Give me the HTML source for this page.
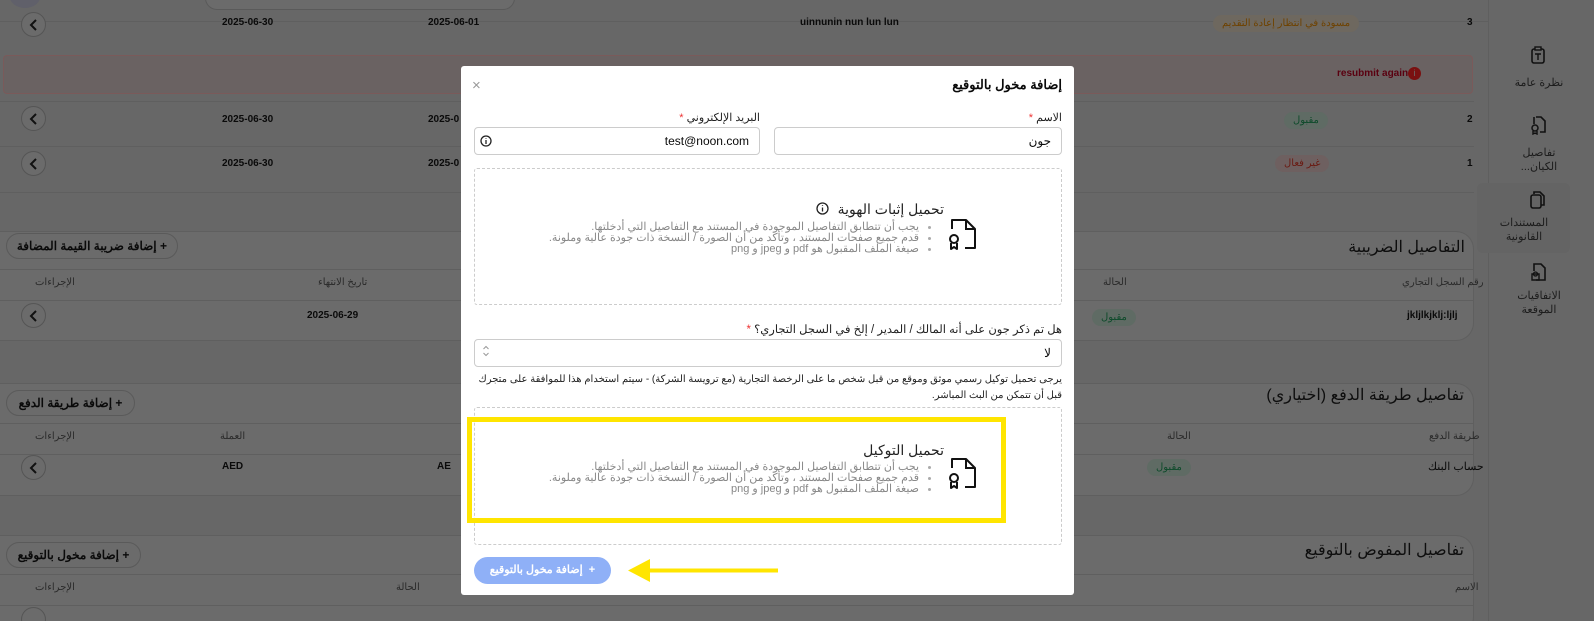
<!DOCTYPE html>
<html style="background:#676767"><head><meta charset="utf-8">
<style>
*{box-sizing:border-box;margin:0;padding:0}
html,body{width:1594px;height:621px;overflow:hidden}
body{position:relative;background:#676767;font-family:"Liberation Sans","Noto Sans CJK SC",sans-serif;color:#0a0a0a}
.a{position:absolute;white-space:nowrap}
.r{direction:rtl}
.line{position:absolute;height:1px;background:#5f5f5f}
.card{position:absolute;background:#6b6b6b;border:1px solid #5f5f5f;border-radius:0 18px 18px 0;border-left:none}
.chev{position:absolute;width:25px;height:25px;border:1px solid #555;border-radius:50%;background:#6b6b6b}
.chev svg{position:absolute;left:6px;top:5px}
.badge{position:absolute;height:17px;border-radius:9px;font-size:10px;line-height:17px;padding:0 9px;direction:rtl;white-space:nowrap}
.g{background:#5f6b64;color:#0d4a2a}
.btn{position:absolute;height:26px;border:1px solid #5a5a5a;border-radius:14px;background:#6b6b6b;font-size:12px;line-height:24px;direction:rtl;padding:0 10px;font-weight:bold;color:#0a0a0a;white-space:nowrap;text-align:center}
.hd{font-size:10px;color:#2a2a2a;direction:rtl}
.dt{font-size:10px;font-weight:bold}
.ttl{font-size:16px;direction:rtl;color:#0e0e0e}
.side{font-size:11px;color:#1c1c1c;direction:rtl;text-align:center;width:100px;line-height:14px}
#m{position:absolute;left:461px;top:66px;width:613px;height:529px;background:#fff;border-radius:3px}
.lab{font-size:11px;direction:rtl;color:#222}
.inp{position:absolute;height:28px;border:1px solid #ccc;border-radius:4px;background:#fff;font-size:12px;line-height:26px;direction:rtl;padding:0 10px}
.dash{position:absolute;border:1px dashed #ccc;border-radius:3px}
ul.b{position:absolute;direction:rtl;font-size:11px;color:#888;line-height:11px;list-style:disc;padding-right:18px}
ul.b li::marker{color:#aaa;font-size:9px}
.ut{font-size:14px;direction:rtl;color:#222}
</style></head><body>
<div class="line" style="left:0;top:21px;width:1488px"></div>
<div class="a" style="left:205px;top:-14px;width:310px;height:24px;border:1px solid #5a5a5a;border-radius:12px;background:#6b6b6b"></div>
<div class="a" style="left:10px;top:-14px;width:30px;height:22px;border-radius:50%;background:#60606a"></div>
<div class="line" style="left:1488px;top:0;width:1px;height:621px"></div>

<div class="chev" style="left:21px;top:12px"><svg width="12" height="14"><path d="M8 2L3 7L8 12" stroke="#111" stroke-width="2" fill="none"/></svg></div>
<div class="a dt" style="left:222px;top:17px">2025-06-30</div>
<div class="a dt" style="left:428px;top:17px">2025-06-01</div>
<div class="a dt" style="left:800px;top:17px">uinnunin nun lun lun</div>
<div class="badge" style="left:1213px;top:15px;background:#6e685f;color:#6e4200">مسودة في انتظار إعادة التقديم</div>
<div class="a dt" style="left:1467px;top:17px">3</div>

<div class="a" style="left:3px;top:55px;width:1470px;height:39px;border:1px solid #7a5a5a;background:#6a6262;border-radius:4px"></div>
<div class="a" style="left:1337px;top:68px;font-size:10px;font-weight:bold;color:#5a0010">resubmit again</div>
<div class="a" style="left:1408px;top:67px;width:13px;height:13px;border-radius:50%;background:#7a1010;color:#6b6b6b;font-size:9px;text-align:center;line-height:13px">i</div>

<div class="line" style="left:0;top:101px;width:1474px"></div>
<div class="chev" style="left:21px;top:106px"><svg width="12" height="14"><path d="M8 2L3 7L8 12" stroke="#111" stroke-width="2" fill="none"/></svg></div>
<div class="a dt" style="left:222px;top:114px">2025-06-30</div>
<div class="a dt" style="left:428px;top:114px">2025-0</div>
<div class="badge g" style="left:1284px;top:112px">مقبول</div>
<div class="a dt" style="left:1467px;top:114px">2</div>
<div class="line" style="left:0;top:146px;width:1474px"></div>
<div class="chev" style="left:21px;top:151px"><svg width="12" height="14"><path d="M8 2L3 7L8 12" stroke="#111" stroke-width="2" fill="none"/></svg></div>
<div class="a dt" style="left:222px;top:158px">2025-06-30</div>
<div class="a dt" style="left:428px;top:158px">2025-0</div>
<div class="badge" style="left:1275px;top:155px;background:#6e6060;color:#6a1a12">غير فعال</div>
<div class="a dt" style="left:1467px;top:158px">1</div>
<div class="line" style="left:0;top:192px;width:1474px"></div>

<div class="card" style="left:-2px;top:231px;width:1476px;height:110px"></div>
<div class="a ttl" style="right:129px;top:237px">التفاصيل الضريبية</div>
<div class="btn" style="left:6px;top:233px;width:172px">+ إضافة ضريبة القيمة المضافة</div>
<div class="line" style="left:0;top:269px;width:1474px"></div>
<div class="a hd" style="left:35px;top:277px">الإجراءات</div>
<div class="a hd" style="left:318px;top:277px">تاريخ الانتهاء</div>
<div class="a hd" style="left:1103px;top:277px">الحالة</div>
<div class="a hd" style="left:1402px;top:277px">رقم السجل التجاري</div>
<div class="line" style="left:0;top:300px;width:1474px"></div>
<div class="chev" style="left:21px;top:303px"><svg width="12" height="14"><path d="M8 2L3 7L8 12" stroke="#111" stroke-width="2" fill="none"/></svg></div>
<div class="a dt" style="left:307px;top:310px">2025-06-29</div>
<div class="badge g" style="left:1092px;top:309px">مقبول</div>
<div class="a dt" style="left:1407px;top:310px">jkljlkjklj:ljlj</div>

<div class="card" style="left:-2px;top:383px;width:1476px;height:113px"></div>
<div class="a ttl" style="right:130px;top:385px">تفاصيل طريقة الدفع (اختياري)</div>
<div class="btn" style="left:6px;top:390px;width:129px">+ إضافة طريقة الدفع</div>
<div class="line" style="left:0;top:423px;width:1474px"></div>
<div class="a hd" style="left:35px;top:431px">الإجراءات</div>
<div class="a hd" style="left:220px;top:431px">العملة</div>
<div class="a hd" style="left:1167px;top:431px">الحالة</div>
<div class="a hd" style="left:1429px;top:431px">طريقة الدفع</div>
<div class="line" style="left:0;top:454px;width:1474px"></div>
<div class="chev" style="left:21px;top:455px"><svg width="12" height="14"><path d="M8 2L3 7L8 12" stroke="#111" stroke-width="2" fill="none"/></svg></div>
<div class="a dt" style="left:222px;top:461px">AED</div>
<div class="a dt" style="left:437px;top:461px">AE</div>
<div class="badge g" style="left:1147px;top:459px">مقبول</div>
<div class="a" style="left:1428px;top:460px;font-size:11px;direction:rtl">حساب البنك</div>

<div class="card" style="left:-2px;top:535px;width:1476px;height:100px"></div>
<div class="a ttl" style="right:130px;top:540px">تفاصيل المفوض بالتوقيع</div>
<div class="btn" style="left:6px;top:542px;width:135px">+ إضافة مخول بالتوقيع</div>
<div class="line" style="left:0;top:574px;width:1474px"></div>
<div class="a hd" style="left:35px;top:582px">الإجراءات</div>
<div class="a hd" style="left:396px;top:582px">الحالة</div>
<div class="a hd" style="left:1455px;top:582px">الاسم</div>
<div class="line" style="left:0;top:605px;width:1474px"></div>
<div class="chev" style="left:21px;top:607px"></div>

<svg class="a" style="left:1530px;top:46px" width="16" height="18"><rect x="2" y="3" width="12" height="14" rx="2" fill="none" stroke="#111" stroke-width="1.6"/><rect x="5" y="1" width="6" height="3" fill="#6b6b6b" stroke="#111" stroke-width="1.4"/><path d="M5 8h6M8 8v6" stroke="#111" stroke-width="1.4"/></svg>
<div class="a side" style="left:1489px;top:76px">نظرة عامة</div>
<svg class="a" style="left:1530px;top:115px" width="16" height="20"><path d="M6 2h5l4 4v11h-5M4 9V2" stroke="#111" stroke-width="1.6" fill="none"/><circle cx="5" cy="13" r="3" fill="none" stroke="#111" stroke-width="1.5"/><path d="M3 16v3l2-1 2 1v-3" stroke="#111" stroke-width="1.4" fill="none"/></svg>
<div class="a side" style="left:1489px;top:146px">تفاصيل<br>الكيان...</div>
<div class="a" style="left:1477px;top:183px;width:93px;height:70px;background:#646464;border-radius:6px"></div>
<svg class="a" style="left:1529px;top:190px" width="16" height="20"><path d="M5 4V2h6l4 4v9h-3" stroke="#111" stroke-width="1.6" fill="none"/><rect x="2" y="5" width="10" height="13" rx="2" fill="none" stroke="#111" stroke-width="1.6"/></svg>
<div class="a side" style="left:1474px;top:216px">المستندات<br>القانونية</div>
<svg class="a" style="left:1530px;top:262px" width="16" height="20"><path d="M4 9V2h7l4 4v12H6" stroke="#111" stroke-width="1.6" fill="none"/><path d="M2 12h7v6H2z" fill="none" stroke="#111" stroke-width="1.4"/><circle cx="5.5" cy="12" r="2" fill="none" stroke="#111" stroke-width="1.3"/></svg>
<div class="a side" style="left:1489px;top:289px">الاتفاقيات<br>الموقعة</div>

<div id="m"></div>
<div class="a" style="left:472px;top:77px;font-size:15px;color:#999">×</div>
<div class="a r" style="right:532px;top:77px;font-size:13px;font-weight:bold">إضافة مخول بالتوقيع</div>
<div class="a lab" style="right:532px;top:111px">الاسم <span style="color:#e33">*</span></div>
<div class="a lab" style="right:834px;top:111px">البريد الإلكتروني <span style="color:#e33">*</span></div>
<div class="inp" style="left:774px;top:127px;width:288px">جون</div>
<div class="inp" style="left:474px;top:127px;width:286px">test@noon.com</div>
<svg class="a" style="left:480px;top:135px" width="12" height="12"><circle cx="6" cy="6" r="5" fill="none" stroke="#222" stroke-width="1.3"/><path d="M6 5v4M6 3v.6" stroke="#222" stroke-width="1.3"/></svg>

<div class="dash" style="left:474px;top:168px;width:588px;height:137px"></div>
<div class="a ut" style="right:650px;top:201px">تحميل إثبات الهوية</div>
<svg class="a" style="left:816px;top:202px" width="13" height="13"><circle cx="6.5" cy="6.5" r="5.5" fill="none" stroke="#222" stroke-width="1.3"/><path d="M6.5 5.5v4M6.5 3.3v.7" stroke="#222" stroke-width="1.3"/></svg>
<svg class="a" style="left:946px;top:217px" width="32" height="34"><path d="M6 12V3h14l9 9v19h-10" stroke="#111" stroke-width="2" fill="none" stroke-linejoin="round"/><path d="M20 3v9h9" stroke="#111" stroke-width="2" fill="none"/><circle cx="8" cy="22" r="4" fill="none" stroke="#111" stroke-width="2"/><path d="M5 26v6l3-2 3 2v-6" stroke="#111" stroke-width="2" fill="none" stroke-linejoin="round"/></svg>
<ul class="b" style="right:657px;top:222px"><li>يجب أن تتطابق التفاصيل الموجودة في المستند مع التفاصيل التي أدخلتها.</li><li>قدم جميع صفحات المستند ، وتأكد من أن الصورة / النسخة ذات جودة عالية وملونة.</li><li>صيغة الملف المقبول هو pdf و jpeg و png</li></ul>

<div class="a lab" style="right:532px;top:322px;font-size:11.5px">هل تم ذكر جون على أنه المالك / المدير / إلخ في السجل التجاري؟ <span style="color:#e33">*</span></div>
<div class="inp" style="left:474px;top:339px;width:588px">لا</div>
<svg class="a" style="left:482px;top:345px" width="8" height="12"><path d="M1.5 4L4 1.5L6.5 4M1.5 8L4 10.5L6.5 8" stroke="#999" stroke-width="1" fill="none"/></svg>
<div class="a r" style="right:532px;top:372px;font-size:10px;line-height:16px;width:590px;white-space:normal;color:#222">يرجى تحميل توكيل رسمي موثق وموقع من قبل شخص ما على الرخصة التجارية (مع ترويسة الشركة) - سيتم استخدام هذا للموافقة على متجرك قبل أن تتمكن من البث المباشر.</div>

<div class="dash" style="left:474px;top:407px;width:588px;height:138px"></div>
<div class="a ut" style="right:650px;top:442px">تحميل التوكيل</div>
<svg class="a" style="left:946px;top:456px" width="32" height="34"><path d="M6 12V3h14l9 9v19h-10" stroke="#111" stroke-width="2" fill="none" stroke-linejoin="round"/><path d="M20 3v9h9" stroke="#111" stroke-width="2" fill="none"/><circle cx="8" cy="22" r="4" fill="none" stroke="#111" stroke-width="2"/><path d="M5 26v6l3-2 3 2v-6" stroke="#111" stroke-width="2" fill="none" stroke-linejoin="round"/></svg>
<ul class="b" style="right:657px;top:462px"><li>يجب أن تتطابق التفاصيل الموجودة في المستند مع التفاصيل التي أدخلتها.</li><li>قدم جميع صفحات المستند ، وتأكد من أن الصورة / النسخة ذات جودة عالية وملونة.</li><li>صيغة الملف المقبول هو pdf و jpeg و png</li></ul>
<div class="a" style="left:467px;top:417px;width:539px;height:106px;border:5px solid #ffe500"></div>

<div class="a" style="left:474px;top:557px;width:137px;height:27px;border-radius:14px;background:#8fb0f7;color:#fff;font-size:11px;font-weight:bold;line-height:27px;text-align:center;direction:rtl">+&nbsp; إضافة مخول بالتوقيع</div>
<svg class="a" style="left:620px;top:557px" width="162" height="28"><path d="M28 13.5H158" stroke="#ffe500" stroke-width="4"/><path d="M8 13.5L30 2V25Z" fill="#ffe500"/></svg>
<div class="a" style="left:0;top:595px;width:461px;height:0"></div>
</body></html>
